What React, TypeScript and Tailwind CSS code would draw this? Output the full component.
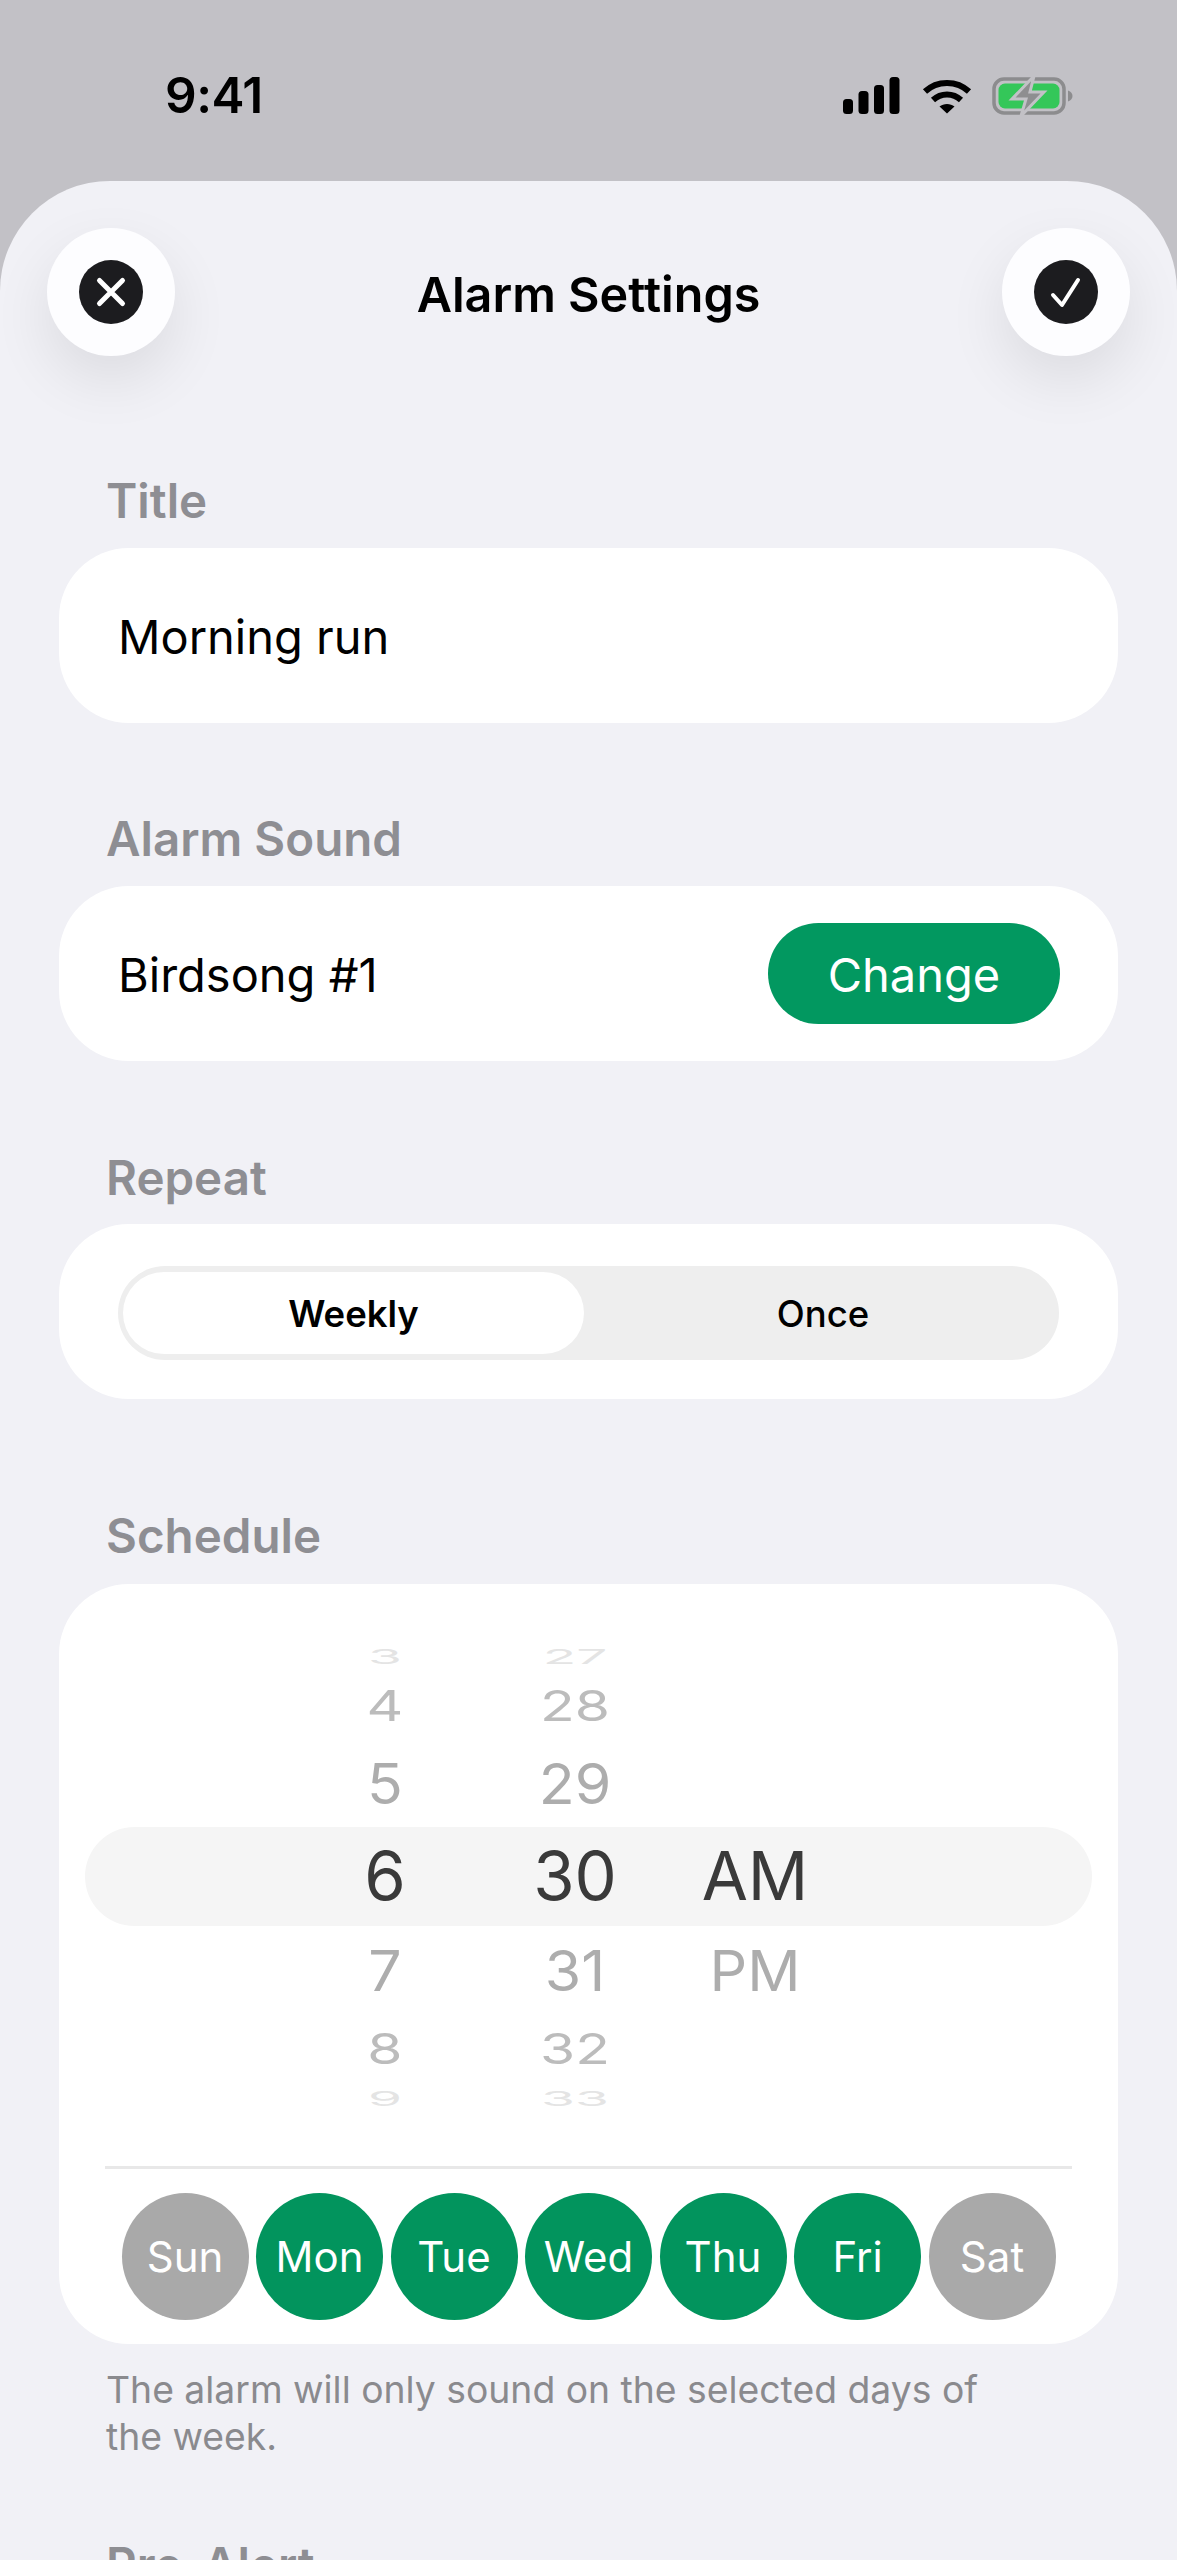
const hours = [
  { t: "3", m: "27", a: "", h: "h-[30px]", c: "text-[#e4e4e4] text-[55px] scale-y-[0.375]" },
  { t: "4", m: "28", a: "", h: "h-[70px]", c: "text-[#bcbcbc] text-[57px] scale-y-[0.75]" },
  { t: "5", m: "29", a: "", h: "h-[86px]", c: "text-[#adadad] text-[59px] scale-y-[0.95]" },
  { t: "6", m: "30", a: "AM", h: "h-[99px] bg-[#f5f5f5] rounded-full pb-[2px]", c: "text-[#3a3a3a] text-[67px]" },
  { t: "7", m: "31", a: "PM", h: "h-[91px] pb-[2px]", c: "text-[#adadad] text-[59px] scale-y-[0.95]" },
  { t: "8", m: "32", a: "", h: "h-[65px] pb-[2px]", c: "text-[#bcbcbc] text-[57px] scale-y-[0.75]" },
  { t: "9", m: "33", a: "", h: "h-[34px] pb-[2px]", c: "text-[#e4e4e4] text-[55px] scale-y-[0.375]" },
];

const days = [
  { d: "Sun", on: false },
  { d: "Mon", on: true },
  { d: "Tue", on: true },
  { d: "Wed", on: true },
  { d: "Thu", on: true },
  { d: "Fri", on: true },
  { d: "Sat", on: false },
];

function Label({ children, className }: { children: string; className: string }) {
  return (
    <div className={`pl-[47px] h-[54px] leading-[57px] text-[47.500px] font-semibold text-[#8e8e93] ${className}`}>
      {children}
    </div>
  );
}

function RoundButton({ children }: { children: React.ReactNode }) {
  return (
    <div className="w-[128px] h-[128px] rounded-full bg-[#fdfdff] flex items-center justify-center shadow-[0_24px_60px_rgba(0,0,0,0.09)]">
      <div className="w-[64px] h-[64px] rounded-full bg-[#1c1c1f] flex items-center justify-center">{children}</div>
    </div>
  );
}

function StatusIcons() {
  return (
    <div className="flex items-center">
      <svg width="58" height="38" viewBox="0 0 58 38" fill="#000">
        <rect x="1" y="22" width="10" height="15" rx="3.5" />
        <rect x="16.5" y="14" width="10" height="23" rx="3.5" />
        <rect x="32" y="8" width="10" height="29" rx="3.5" />
        <rect x="47.5" y="0" width="10" height="37" rx="3.5" />
      </svg>
      <svg className="ml-[22px]" width="50" height="38" viewBox="0 0 50 38" fill="none" stroke="#000" strokeWidth="6">
        <path d="M3 14.5C15 3 35 3 47 14.5" />
        <path d="M11 23C19 15.5 31 15.500 39 23" />
        <path d="M25 36.5 17.5 29.5C21.5 26 28.5 26 32.5 29.5Z" fill="#000" stroke="none" />
      </svg>
      <svg className="ml-[20px]" width="82" height="40" viewBox="0 0 82 40" fill="none">
        <rect x="2" y="3" width="70" height="34" rx="10" stroke="#8c8c8e" strokeWidth="3.5" />
        <rect x="6.5" y="7.5" width="61" height="25" rx="6.5" fill="#34c759" />
        <path d="M76 14.5c3 1 4.5 3 4.5 5.5s-1.500 4.500-4.500 5.500Z" fill="#8c8c8e" />
        <path d="M42 0 20 23h14l-5 17 23-24H38Z" fill="#8e8e90" stroke="#c2c1c6" strokeWidth="3" />
      </svg>
    </div>
  );
}

export default function App() {
  return (
    <div className="w-[1177px] h-[2560px] overflow-hidden bg-[#c2c1c6] font-['Inter',sans-serif] text-black">
      <div className="h-[181px] pt-[66px] pl-[165px] pr-[103px] flex justify-between items-start">
        <div className="text-[49.500px] leading-[58px] font-semibold tracking-[-0.5px]">9:41</div>
        <div className="pt-[10px]">
          <StatusIcons />
        </div>
      </div>

      <div className="bg-[#f1f1f6] rounded-t-[110px] h-[2379px]">
        <div className="pt-[47px] px-[47px] flex justify-between items-center">
          <RoundButton>
            <svg width="34" height="34" viewBox="0 0 34 34" fill="none" stroke="#fff" strokeWidth="5" strokeLinecap="round">
              <path d="M5.500 5.500l23 23M28.500 5.500l-23 23" />
            </svg>
          </RoundButton>
          <div className="text-[48.500px] leading-[58px] font-semibold pt-[6px]">Alarm Settings</div>
          <RoundButton>
            <svg width="36" height="36" viewBox="0 0 36 36" fill="none" stroke="#fff" strokeWidth="4" strokeLinecap="round" strokeLinejoin="round">
              <path d="M5 21l9 10L30 6" />
            </svg>
          </RoundButton>
        </div>

        <div className="px-[59px]">
          <Label className="mt-[116px] mb-[22px]">Title</Label>
          <div className="h-[175px] bg-white rounded-[70px] pl-[59px] pt-[3px] flex items-center text-[47px]">Morning run</div>

          <Label className="mt-[87px] mb-[22px]">Alarm Sound</Label>
          <div className="h-[175px] bg-white rounded-[70px] pl-[59px] pr-[58px] flex items-center justify-between text-[47px]">
            <div className="pt-[3px]">Birdsong #1</div>
            <div className="w-[292px] h-[101px] rounded-full bg-[#029860] text-white flex items-center justify-center pt-[3px]">Change</div>
          </div>

          <Label className="mt-[88px] mb-[21px]">Repeat</Label>
          <div className="h-[175px] bg-white rounded-[70px] px-[59px] pt-[3px] flex items-center">
            <div className="w-full h-[94px] rounded-full bg-[#eeeeee] flex items-center pl-[5px] text-[36.500px]">
              <div className="w-[461px] h-[82px] rounded-full bg-white flex items-center justify-center font-semibold pt-[2px]">Weekly</div>
              <div className="flex-1 flex items-center justify-center font-medium pt-[2px] pl-[3px]">Once</div>
            </div>
          </div>

          <Label className="mt-[108px] mb-[23px]">Schedule</Label>
          <div className="h-[760px] bg-white rounded-[70px] pt-[57px] px-[26px]">
            {hours.map((r) => (
              <div key={r.t} className={`${r.h} flex items-center pl-[205px] text-center leading-[0px]`}>
                <div className={`w-[190px] ${r.c}`}>{r.t}</div>
                <div className={`w-[190px] ${r.c}`}>{r.m}</div>
                <div className={`w-[170px] ${r.c}`}>{r.a}</div>
              </div>
            ))}
            <div className="mt-[50px] mx-[20px] h-[3px] bg-[#e8e8e8]" />
            <div className="mt-[24px] flex justify-center gap-[7.500px]">
              {days.map((x) => (
                <div
                  key={x.d}
                  className={`w-[127px] h-[127px] rounded-full flex items-center justify-center text-[42px] text-white ${x.on ? "bg-[#02945d]" : "bg-[#a9a9a9]"}`}
                >
                  {x.d}
                </div>
              ))}
            </div>
          </div>

          <div className="mt-[22px] pl-[47px] pr-[100px] text-[37.300px] leading-[47px] text-[#8a8a8e]">
            The alarm will only sound on the selected days of the week.
          </div>

          <Label className="mt-[76px]">Pre-Alert</Label>
        </div>
      </div>
    </div>
  );
}
